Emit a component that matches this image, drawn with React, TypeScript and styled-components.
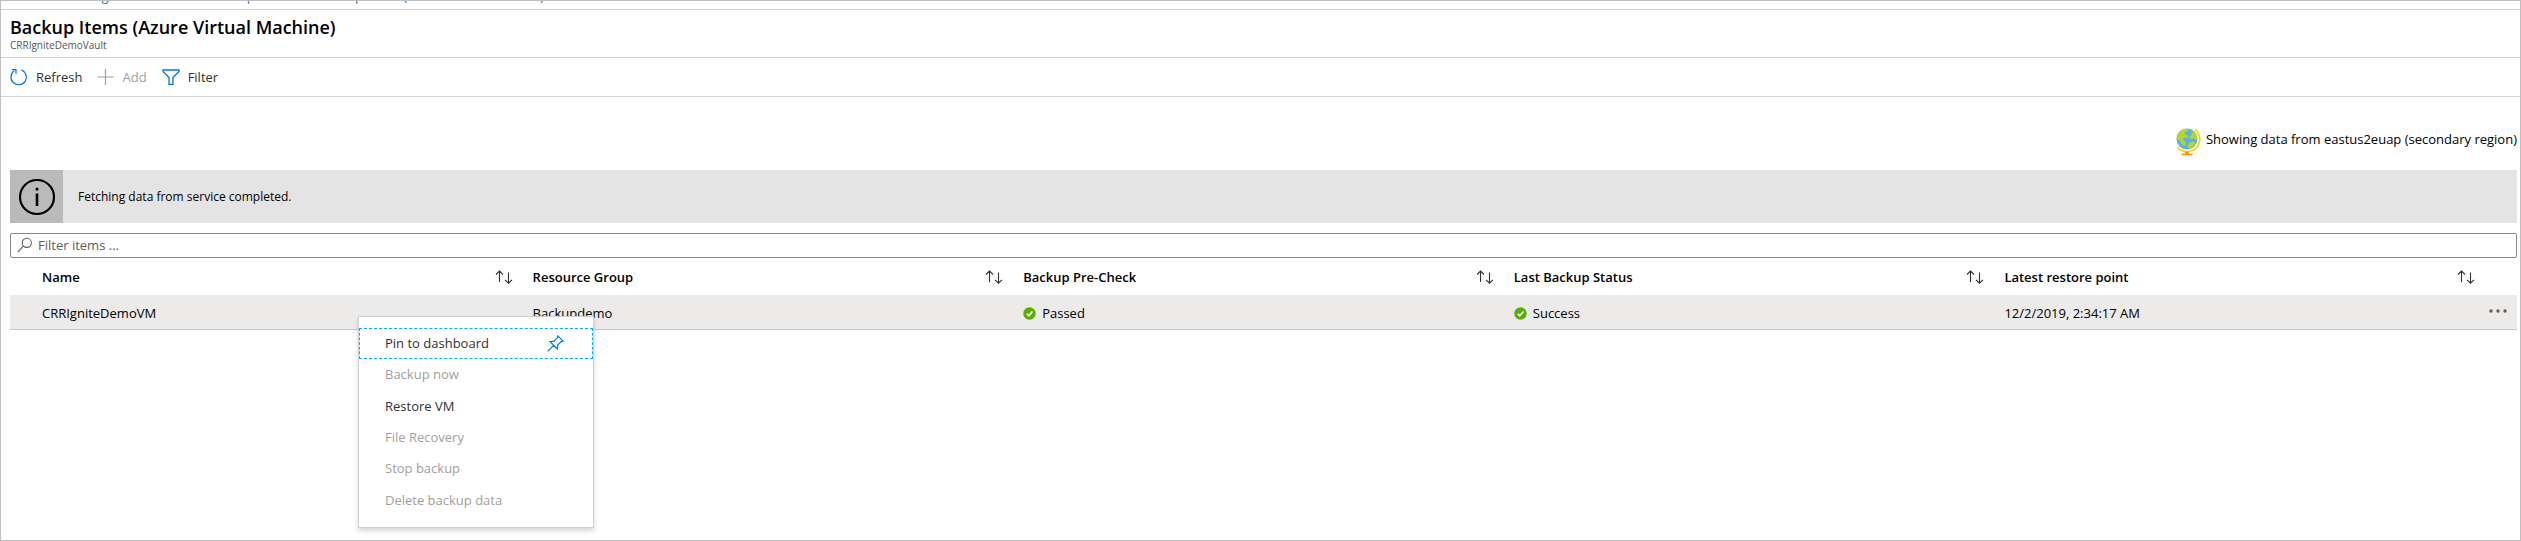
import React from "react";
import styled, { createGlobalStyle } from "styled-components";

const GlobalStyle = createGlobalStyle`
  * { box-sizing: border-box; }
  body { margin: 0; background: #fff; }
  body, button, input { font-family: "Open Sans", "Noto Sans", sans-serif; font-size: 13px; }
`;

const Page = styled.main`
  position: relative;
  min-height: 100vh;
  border: 1px solid #c0c0c0;
  background: #fff;
  color: #000;
`;

const Breadcrumb = styled.nav`
  display: flex;
  align-items: flex-end;
  gap: 16px;
  height: 8px;
  padding: 0 9px 4px;
  overflow: hidden;
`;

const Crumb = styled.a`
  flex: none;
  color: #1a78d6;
  line-height: 18px;
  white-space: nowrap;
  text-decoration: none;
`;

const Header = styled.header`
  height: 49px;
  padding: 6px 9px 0;
  border-top: 1px solid #d2d2d2;
  border-bottom: 1px solid #d2d2d2;
`;

const Title = styled.h1`
  margin: 0;
  font-size: 18px;
  line-height: 23px;
  font-weight: 600;
`;

const Subtitle = styled.div`
  font-size: 10px;
  line-height: 12px;
  color: #555;
`;

const Toolbar = styled.div`
  display: flex;
  align-items: center;
  gap: 15px;
  height: 39px;
  padding: 0 9px;
  border-bottom: 1px solid #d2d2d2;
`;

const ToolButton = styled.button`
  display: flex;
  align-items: center;
  gap: 8px;
  padding: 0;
  border: 0;
  background: none;
  line-height: 18px;
  color: #323130;
  &:disabled { color: #a19f9d; }
`;

const Content = styled.section`
  padding: 31px 3px 0 9px;
`;

const Region = styled.div`
  display: flex;
  justify-content: flex-end;
  gap: 5px;
  height: 42px;
  line-height: 22px;
`;

const Banner = styled.div`
  display: flex;
  align-items: center;
  height: 53px;
  background: #e4e4e4;
  font-size: 12px;
`;

const BannerIcon = styled.div`
  display: grid;
  place-items: center;
  width: 53px;
  height: 53px;
  margin-right: 15px;
  background: #bababa;
`;

const SearchBox = styled.label`
  display: flex;
  align-items: center;
  gap: 5px;
  height: 25px;
  margin-top: 10px;
  padding: 0 6px 2px;
  border: 1px solid #8a8886;
  border-radius: 2px;
`;

const SearchInput = styled.input`
  flex: 1;
  min-width: 0;
  padding: 0;
  border: 0;
  outline: 0;
  background: none;
  &::placeholder { color: #605e5c; opacity: 1; }
`;

const Table = styled.table`
  width: 100%;
  table-layout: fixed;
  border-collapse: separate;
  border-spacing: 0;
`;

const HeadCell = styled.th`
  height: 37px;
  padding: 0 20px 0 0;
  text-align: left;
  font-weight: 600;
`;

const Edge = styled.col<{ $size: number }>`
  width: ${(p) => p.$size}px;
`;

const HeadLabel = styled.div`
  display: flex;
  align-items: center;
  justify-content: space-between;
`;

const SortButton = styled.button`
  display: flex;
  padding: 0;
  border: 0;
  background: none;
`;

const Cell = styled.td`
  height: 35px;
  padding: 2px 0 0;
  background: #ecebe9;
  border-bottom: 1px solid #c8c6c4;
`;

const Status = styled.span`
  display: flex;
  align-items: center;
  gap: 6px;
`;

const MoreButton = styled.button`
  display: flex;
  float: right;
  margin-left: -10px;
  padding: 0 10px 4px 0;
  border: 0;
  background: none;
`;

const Menu = styled.div`
  position: absolute;
  top: 315px;
  left: 357px;
  display: flex;
  flex-direction: column;
  width: 236px;
  height: 212px;
  padding: 11px 0;
  border: 1px solid #d0d0d0;
  background: #fff;
  box-shadow: 0 3px 5px rgba(0, 0, 0, 0.16);
`;

const MenuItem = styled.button<{ $focused?: boolean }>`
  display: flex;
  flex: 1;
  align-items: center;
  justify-content: space-between;
  padding: 0 28px 1px 25px;
  border: 1px dashed ${(p) => (p.$focused ? "#00b0f0" : "transparent")};
  background: none;
  text-align: left;
  color: #323130;
  &:disabled { color: #a19f9d; }
`;

const RefreshIcon = () => (
  <svg width="18" height="18" viewBox="0 0 18 18" fill="none" stroke="#0078d4" strokeWidth="1.2">
    <path d="M11.5 1.9A7.7 7.7 0 1 1 4.5 2.6M1.8 1.5H6V5.7" />
  </svg>
);
const AddIcon = () => (
  <svg width="17" height="18" viewBox="0 0 17 18" stroke="#a19f9d" strokeWidth="1.2">
    <path d="M8.5 1v16M0.5 9h16" />
  </svg>
);
const FilterIcon = () => (
  <svg width="18" height="18" viewBox="0 0 18 18" fill="none" stroke="#0078d4" strokeWidth="1.3">
    <path d="M1 2H17V3.4L11 9.6V16.3H7V9.6L1 3.4Z" />
  </svg>
);
const InfoIcon = () => (
  <svg width="38" height="38" viewBox="0 0 38 38" fill="none" stroke="#000">
    <circle cx="19" cy="19" r="17" strokeWidth="2.2" />
    <path d="M19 15.5V28M19 9.8V12.6" strokeWidth="2.6" />
  </svg>
);
const SearchIcon = () => (
  <svg width="16" height="16" viewBox="0 0 16 16" fill="none" stroke="#605e5c" strokeWidth="1.1">
    <circle cx="9.8" cy="5.8" r="4.6" />
    <path d="M6.4 9.2L0.8 15" />
  </svg>
);
const SortIcon = () => (
  <svg width="18" height="14" viewBox="0 0 18 14" fill="none" stroke="#323130" strokeWidth="1.1">
    <path d="M4.5 12V1M1 4.5L4.5 1L8 4.5M13.5 2.5V13.2M10 9.8L13.5 13.2L17 9.8" />
  </svg>
);
const CheckIcon = () => (
  <svg width="13" height="13" viewBox="0 0 13 13">
    <circle cx="6.5" cy="6.5" r="6.2" fill="#57b000" />
    <path d="M3.8 6.7L5.8 8.7L9.4 4.4" fill="none" stroke="#fff" strokeWidth="1.6" />
  </svg>
);
const MoreIcon = () => (
  <svg width="18" height="4" viewBox="0 0 18 4" fill="#605e5c">
    <circle cx="2" cy="2" r="1.7" />
    <circle cx="9" cy="2" r="1.7" />
    <circle cx="16" cy="2" r="1.7" />
  </svg>
);
const PinIcon = () => (
  <svg width="17" height="17" viewBox="0 0 17 17" fill="none" stroke="#0078d4" strokeWidth="1.2">
    <path d="M10.8 0.9L16.1 6.2L14.2 6.6L10.8 10L10.4 14L3 6.6L7 6.2L10.4 2.8ZM6.6 10.3L0.6 16.4" />
  </svg>
);
const GlobeIcon = () => (
  <svg width="25" height="28" viewBox="0 0 25 28">
    <circle cx="11" cy="11" r="10.5" fill="#59b4d9" />
    <path d="M2 5.5C5 1 9 0.2 13 0.8L11.5 3.5L8.5 4L10 7L13 7.5L11 10L8 9.5L7 12L9.5 14L9 18L5.5 16L3.5 12L1 11ZM15.5 3.5L18.5 4C20.5 6 21.5 9 21.3 12L18 10.5L15 11L13 9L15.5 7ZM13 15L17 13.5L19.5 15C18 18 15.5 20.3 13 21L11.5 18Z" fill="#b8d432" />
    <path d="M19 1.2C26 8 24.5 18 17.5 22C12 25 5.5 23.8 1.5 19.5" fill="none" stroke="#fcd116" strokeWidth="1.8" />
    <path d="M9 23.5H13V25.5H16.5V27.3H5.5V25.5H9Z" fill="#ff9a00" />
  </svg>
);

const columns = ["Name", "Resource Group", "Backup Pre-Check", "Last Backup Status", "Latest restore point"];

const crumbs = ["Home >", "CRRIgniteDemoVault - Backup items >", "Backup Items (Azure Virtual Machine)"];

const menuItems = [
  { label: "Pin to dashboard", enabled: true, pinned: true },
  { label: "Backup now", enabled: false },
  { label: "Restore VM", enabled: true },
  { label: "File Recovery", enabled: false },
  { label: "Stop backup", enabled: false },
  { label: "Delete backup data", enabled: false },
];

export default function App() {
  return (
    <>
      <GlobalStyle />
      <Page>
        <Breadcrumb aria-label="Breadcrumb">
          {crumbs.map((c) => <Crumb key={c} href="#">{c}</Crumb>)}
        </Breadcrumb>
        <Header>
          <Title>Backup Items (Azure Virtual Machine)</Title>
          <Subtitle>CRRIgniteDemoVault</Subtitle>
        </Header>
        <Toolbar>
          <ToolButton><RefreshIcon />Refresh</ToolButton>
          <ToolButton disabled><AddIcon />Add</ToolButton>
          <ToolButton><FilterIcon />Filter</ToolButton>
        </Toolbar>
        <Content>
          <Region><GlobeIcon />Showing data from eastus2euap (secondary region)</Region>
          <Banner role="status">
            <BannerIcon><InfoIcon /></BannerIcon>
            Fetching data from service completed.
          </Banner>
          <SearchBox>
            <SearchIcon />
            <SearchInput type="text" aria-label="Filter items" placeholder="Filter items ..." />
          </SearchBox>
          <Table>
            <colgroup>
              <Edge $size={32} />
              {columns.map((c) => <col key={c} />)}
              <Edge $size={22} />
            </colgroup>
            <thead>
              <tr>
                <td />
                {columns.map((c) => (
                  <HeadCell key={c} scope="col">
                    <HeadLabel>{c}<SortButton aria-label={`Sort by ${c}`}><SortIcon /></SortButton></HeadLabel>
                  </HeadCell>
                ))}
                <td />
              </tr>
            </thead>
            <tbody>
              <tr>
                <Cell />
                <Cell>CRRIgniteDemoVM</Cell>
                <Cell>Backupdemo</Cell>
                <Cell><Status><CheckIcon />Passed</Status></Cell>
                <Cell><Status><CheckIcon />Success</Status></Cell>
                <Cell>12/2/2019, 2:34:17 AM</Cell>
                <Cell><MoreButton aria-label="More actions"><MoreIcon /></MoreButton></Cell>
              </tr>
            </tbody>
          </Table>
        </Content>
        <Menu role="menu">
          {menuItems.map((m) => (
            <MenuItem key={m.label} role="menuitem" disabled={!m.enabled} $focused={m.pinned}>
              {m.label}
              {m.pinned && <PinIcon />}
            </MenuItem>
          ))}
        </Menu>
      </Page>
    </>
  );
}
